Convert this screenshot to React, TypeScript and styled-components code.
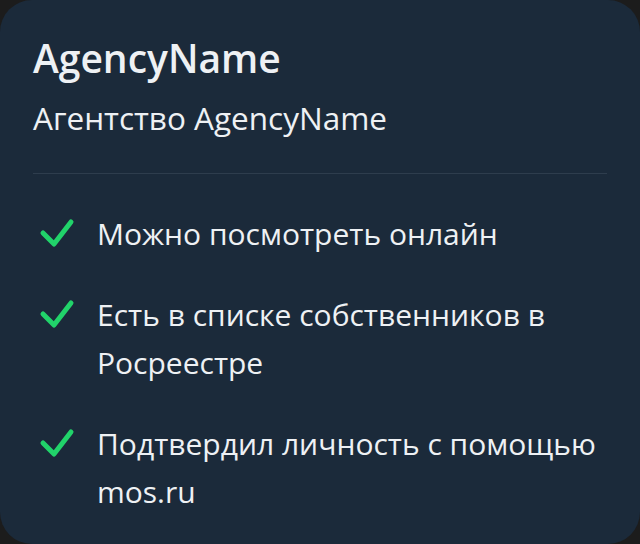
import React from "react";
import styled, { createGlobalStyle } from "styled-components";

const Global = createGlobalStyle`
  html, body { margin: 0; padding: 0; background: #1c1c1c; }
  body { font-family: "Open Sans", "Noto Sans", sans-serif; }
`;

const Card = styled.div`
  box-sizing: border-box;
  width: 640px;
  height: 544px;
  background: #1b2a3a;
  border-radius: 32px;
  padding: 35px 33px 0 33px;
  color: #eef1f4;
  display: flex;
  flex-direction: column;
`;

const Title = styled.h1`
  margin: 0;
  font-size: 39px;
  font-weight: 600;
  line-height: 46px;
  letter-spacing: 0;
`;

const Subtitle = styled.div`
  margin-top: 17px;
  font-size: 31.5px;
  line-height: 40px;
  font-weight: 400;
`;

const Divider = styled.hr`
  margin: 35px 0 0 0;
  border: none;
  height: 1px;
  background: #2e3d4d;
`;

const List = styled.ul`
  list-style: none;
  margin: 36px 0 0 0;
  padding: 0;
  display: flex;
  flex-direction: column;
  gap: 33px;
`;

const Item = styled.li`
  display: flex;
  align-items: flex-start;
  gap: 20px;
`;

const Check = styled.svg`
  flex: none;
  width: 44px;
  height: 48px;
`;

const Text = styled.span`
  font-size: 30px;
  line-height: 48px;
`;

const CheckIcon = () => (
  <Check viewBox="0 0 44 48">
    <path d="M10 23 L21 34 L38 12" fill="none" stroke="#21d36a" strokeWidth="5" strokeLinecap="round" strokeLinejoin="round" />
  </Check>
);

const items = [
  "Можно посмотреть онлайн",
  "Есть в списке собственников в Росреестре",
  "Подтвердил личность с помощью mos.ru",
];

export default function App() {
  return (
    <>
      <Global />
      <Card>
        <Title>AgencyName</Title>
        <Subtitle>Агентство AgencyName</Subtitle>
        <Divider />
        <List>
          {items.map((t) => (
            <Item key={t}>
              <CheckIcon />
              <Text>{t}</Text>
            </Item>
          ))}
        </List>
      </Card>
    </>
  );
}
